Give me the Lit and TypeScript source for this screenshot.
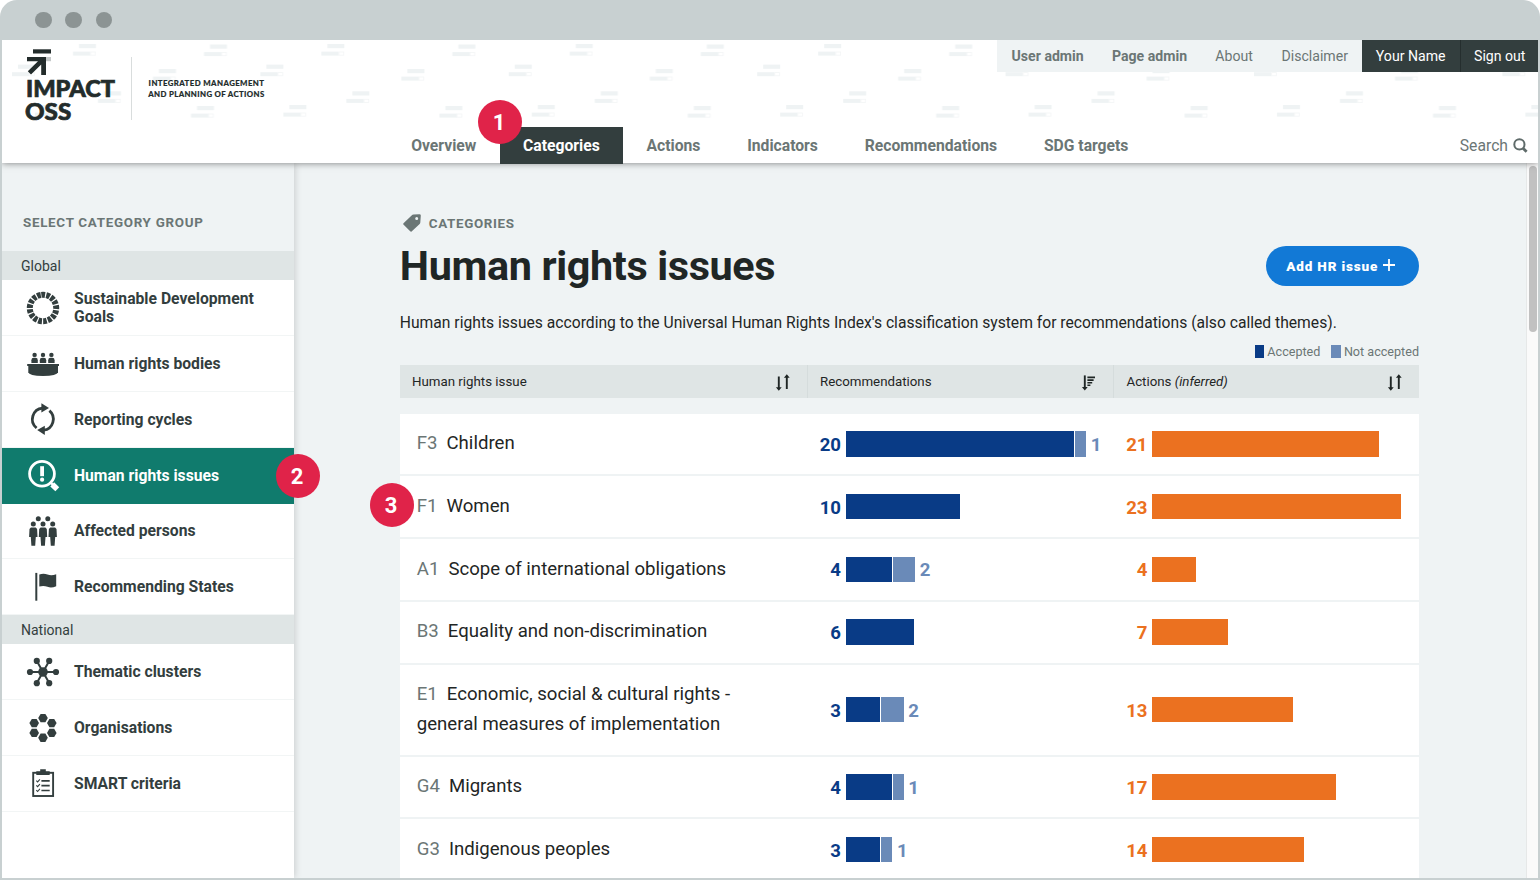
import { LitElement, html, svg, css, TemplateResult } from "lit";
import { customElement, property } from "lit/decorators.js";
import { classMap } from "lit/directives/class-map.js";
import { styleMap } from "lit/directives/style-map.js";

const SEGMENT = 83 / 17;
const HEX = "-4.8,0 -2.4,-4.2 2.4,-4.2 4.8,0 2.4,4.2 -2.4,4.2";

const icons: Record<string, TemplateResult> = {
  wheel: svg`<circle cx="17" cy="17" r="13.21" fill="none" stroke="currentColor" stroke-width="6"
    stroke-dasharray="${SEGMENT - 1.2} 1.2" transform="rotate(-97 17 17)" />`,
  bodies: svg`
    ${[8.6, 17, 25.4].map(
      (x) => svg`<circle cx=${x} cy="7.9" r="2.2" />
      <path d="M${x - 3.2} 16v-2.8q0-2.4 2.4-2.4h1.6q2.4 0 2.4 2.4v2.8z" />`
    )}
    <rect x="1.2" y="17" width="31.8" height="2" />
    <path d="M2.3 19h29.7v6.2Q31 28.9 17 28.9T2.3 25.2z" />`,
  cycle: svg`
    <path d="M16.6 6.1A11.2 11.2 0 0 0 10.6 26" fill="none" stroke="currentColor" stroke-width="2.8" />
    <path d="M17.6 28.2A11.2 11.2 0 0 0 23.4 8.6" fill="none" stroke="currentColor" stroke-width="2.8" />
    <path d="M15.4 1.2L23 6.1L15.4 10.6z" />
    <path d="M18.8 33L11.2 28.1L18.8 23.8z" />`,
  issue: svg`
    <circle cx="16" cy="15.7" r="12.4" fill="none" stroke="currentColor" stroke-width="2.8" />
    <rect x="14.2" y="8.2" width="3.8" height="10" />
    <circle cx="16.1" cy="21.7" r="2.1" />
    <path d="M24 24l3.5 3.4" stroke="currentColor" stroke-width="2.4" />
    <path d="M26.2 26.4l5.1 4.8" stroke="currentColor" stroke-width="5.6" />`,
  persons: svg`
    <circle cx="12.3" cy="4.8" r="2.5" /><circle cx="21.8" cy="4.8" r="2.5" />
    ${[7.3, 17, 26.7].map(
      (x) => svg`<circle cx=${x} cy="9.9" r="2.5" />
      <path d="M${x - 2.4} 13.5h4.8l1.4 1.6l.4 7.9h-1.7l-.6 8.7h-3.8l-.6-8.7h-1.7l.4-7.9z" />`
    )}`,
  flag: svg`
    <rect x="9.3" y="2.9" width="2" height="27.8" />
    <path d="M13.3 4.6Q17.5 3 21.5 4.6T30.2 4.3V16.2Q25.5 18.2 21.5 16.8T13.3 16.6z" />`,
  cluster: svg`
    <path d="M4 17H30M10.8 6L23.2 28M23.2 6L10.8 28" stroke="currentColor" stroke-width="2" />
    <circle cx="17" cy="17" r="4.8" />
    ${[[4, 17], [30, 17], [10.8, 5.9], [23.2, 5.9], [10.8, 28.2], [23.2, 28.2]].map(
      ([x, y]) => svg`<circle cx=${x} cy=${y} r="3.1" />`
    )}`,
  hexes: svg`${[[17, 7.1], [25.8, 12.1], [25.8, 21.9], [17, 26.8], [8.2, 21.9], [8.2, 12.1]].map(
    ([x, y]) => svg`<polygon points=${HEX} transform="translate(${x} ${y})" />`
  )}`,
  clipboard: svg`
    <rect x="7.2" y="6.8" width="19.9" height="23.2" fill="none" stroke="currentColor" stroke-width="1.9" />
    <path d="M10.3 8.9V5.2h3.9V3.2h5.6v2h3.9v3.7z" />
    <path d="M15.4 14.9h8.3M15.4 19.7h8.3M15.4 24.5h8.3" stroke="currentColor" stroke-width="1.7" />
    <path d="M10.3 14.6l1.3 1.3l2.3-2.6M10.3 19.4l1.3 1.3l2.3-2.6M10.3 24.2l1.3 1.3l2.3-2.6" fill="none" stroke="currentColor" stroke-width="1.1" />`,
};

const sortIcon = svg`
  <path d="M3.8 3.4V16M11.8 16V3" stroke="currentColor" stroke-width="1.9" />
  <path d="M.9 14.3h5.8L3.8 17.8zM8.9 4.8h5.8L11.8 1.2z" />`;
const sortedIcon = svg`
  <path d="M3.8 2.4V15.6" stroke="currentColor" stroke-width="1.9" />
  <path d="M.9 14h5.8L3.8 17.6z" />
  <path d="M6.4 4.4H14M6.4 7.1H12.6M6.4 9.8H11.2M6.4 12.3H9.4" stroke="currentColor" stroke-width="1.6" />`;

interface NavItem { label: string; icon: string; active?: boolean; }
const groups: { title: string; items: NavItem[] }[] = [
  {
    title: "Global",
    items: [
      { label: "Sustainable Development Goals", icon: "wheel" },
      { label: "Human rights bodies", icon: "bodies" },
      { label: "Reporting cycles", icon: "cycle" },
      { label: "Human rights issues", icon: "issue", active: true },
      { label: "Affected persons", icon: "persons" },
      { label: "Recommending States", icon: "flag" },
    ],
  },
  {
    title: "National",
    items: [
      { label: "Thematic clusters", icon: "cluster" },
      { label: "Organisations", icon: "hexes" },
      { label: "SMART criteria", icon: "clipboard" },
    ],
  },
];

interface Row { code: string; name: string; yes: number; no: number; actions: number; }
const rows: Row[] = [
  { code: "F3", name: "Children", yes: 20, no: 1, actions: 21 },
  { code: "F1", name: "Women", yes: 10, no: 0, actions: 23 },
  { code: "A1", name: "Scope of international obligations", yes: 4, no: 2, actions: 4 },
  { code: "B3", name: "Equality and non-discrimination", yes: 6, no: 0, actions: 7 },
  { code: "E1", name: "Economic, social & cultural rights - general measures of implementation", yes: 3, no: 2, actions: 13 },
  { code: "G4", name: "Migrants", yes: 4, no: 1, actions: 17 },
  { code: "G3", name: "Indigenous peoples", yes: 3, no: 1, actions: 14 },
];

const REC_UNIT = 11.4;
const ACTION_UNIT = 10.81;

@customElement("oss-header")
class OssHeader extends LitElement {
  static styles = css`
    :host { display: block; position: relative; z-index: 2; height: 123.3px; background: #fff; box-shadow: 0 0 7px rgba(0, 0, 0, 0.5); clip-path: inset(0 0 -12px 0); }
    .pattern { position: absolute; inset: 0; width: 100%; height: 100%; }
    .content { position: relative; height: 100%; display: flex; justify-content: space-between; }
    .logo { width: 280px; height: 100px; flex: none; }
    .side { display: flex; flex-direction: column; justify-content: space-between; flex: 1; height: 124px; }
    .user { display: flex; align-self: flex-end; height: 32px; line-height: 32px; font-size: 14.1px; color: #6b7675; }
    .user span { padding: 0 13.6px 0 15px; background: #eff3f4; white-space: nowrap; }
    .user .strong { font-weight: 700; padding-right: 13.3px; }
    .user .dark { background: #333e3e; color: #fff; padding: 0 14.3px; }
    .user .last { border-left: 1px solid #252e2e; padding: 0 12.5px 0 13.3px; }
    .main { display: flex; margin-left: 105.8px; height: 37px; line-height: 37px; font-size: 15.7px; font-weight: 700; color: #6b7675; }
    .main span { padding: 0 23.4px; white-space: nowrap; }
    .main .active { background: #333e3e; color: #fff; }
    .main .search { margin-left: auto; padding: 0 10px 0 0; font-weight: 400; display: flex; align-items: center; gap: 5px; }
    .search svg { margin-top: -1px; }
  `;
  render() {
    const marks = [[71, 4], [202, 4.5], [10, 24.6], [151, 29], [96, 51.3], [189, 66], [33, 65], [-46.4, 4.5]];
    return html`
      <svg class="pattern" aria-hidden="true">
        <defs>
          <pattern id="dashes" width="248.4" height="123" patternUnits="userSpaceOnUse">
            ${marks.map(([x, y]) => svg`<g transform="translate(${x} ${y})" fill="#eff3f4">
              <rect x="6" y="0" width="17" height="4.2" />
              <rect x="0" y="7.6" width="17.4" height="4" />
              <rect x="17.6" y="8" width="4.8" height="3.2" fill="#fff" stroke="#f3f5f6" stroke-width=".8" />
            </g>`)}
          </pattern>
        </defs>
        <rect width="100%" height="100%" fill="url(#dashes)" />
      </svg>
      <div class="content">
        <svg class="logo" viewBox="2 40 280 100" fill="#232c2b">
          <rect x="33" y="49.3" width="18" height="4.2" />
          <rect x="46" y="57" width="5" height="4.2" fill="#c4c8c8" />
          <path d="M27 57H46V75H41.2V64.4L31 74.4L27.8 71.3L38 61.2H27z" />
          <g font-family="Lato" font-weight="900" font-size="23.4" stroke="#232c2b" stroke-width=".7">
            <text x="26" y="97" textLength="89" lengthAdjust="spacingAndGlyphs">IMPACT</text>
            <text x="25" y="120" textLength="46.2" lengthAdjust="spacingAndGlyphs">OSS</text>
          </g>
          <rect x="131" y="57" width="1" height="63" fill="#d9dddd" />
          <g font-family="Lato" font-weight="900" font-size="7.8" stroke="#232c2b" stroke-width=".15">
            <text x="148.6" y="86.4" textLength="115.4">INTEGRATED MANAGEMENT</text>
            <text x="148.2" y="97.1" textLength="116">AND PLANNING OF ACTIONS</text>
          </g>
        </svg>
        <div class="side">
          <div class="user">
            <span class="strong">User admin</span><span class="strong">Page admin</span>
            <span>About</span><span>Disclaimer</span>
            <span class="dark">Your Name</span><span class="dark last">Sign out</span>
          </div>
          <div class="main">
            <span>Overview</span><span class="active">Categories</span><span>Actions</span>
            <span>Indicators</span><span>Recommendations</span><span>SDG targets</span>
            <span class="search">Search
              <svg width="15" height="15" viewBox="0 0 15 15" fill="none" stroke="#5f6b6a">
                <circle cx="6.4" cy="6.4" r="5.1" stroke-width="2" />
                <path d="M10 10.2L13.6 13.8" stroke-width="2.8" />
              </svg>
            </span>
          </div>
        </div>
      </div>`;
  }
}

@customElement("oss-sidebar")
class OssSidebar extends LitElement {
  static styles = css`
    :host { display: block; width: 291.6px; flex: none; background: #fff; box-shadow: 0 0 8px rgba(0, 0, 0, 0.2); position: relative; z-index: 1; color: #333e3e; }
    .title { height: 88px; box-sizing: border-box; padding: 51.8px 0 0 21px; background: #eff3f4; font-size: 13.4px; line-height: 16px; font-weight: 700; letter-spacing: 0.7px; color: #6b7675; }
    .group { height: 29.2px; line-height: 30px; padding-left: 19px; font-size: 14px; background: #dfe5e5; }
    .item { display: flex; align-items: center; height: 55.8px; box-sizing: border-box; border-bottom: 1.4px solid #f2f5f5; padding-left: 23.7px; font-size: 15.7px; line-height: 18.6px; font-weight: 700; }
    .icon { width: 34px; height: 34px; flex: none; margin-right: 14.3px; }
    .label { width: 190px; padding-top: 1.2px; }
    .active { background: #107b6d; color: #fff; border-color: #107b6d; }
  `;
  render() {
    return html`
      <div class="title">SELECT CATEGORY GROUP</div>
      ${groups.map((g) => html`
        <div class="group">${g.title}</div>
        ${g.items.map((i) => html`
          <div class=${classMap({ item: true, active: !!i.active })}>
            <svg class="icon" viewBox="0 0 34 34" fill="currentColor">${icons[i.icon]}</svg>
            <span class="label">${i.label}</span>
          </div>`)}
      `)}`;
  }
}

@customElement("oss-row")
class OssRow extends LitElement {
  @property({ attribute: false }) row!: Row;
  static styles = css`
    :host { display: grid; grid-template-columns: 407px 306.5px 305.6px; align-items: center; background: #fff; border-bottom: 2px solid #eff3f4; padding: 15.6px 0 15.7px; }
    .name { padding-left: 17px; width: 350px; font-size: 18.6px; line-height: 29.4px; color: #1f2625; }
    .code { color: #6b7675; margin-right: 9px; }
    .chart { display: flex; align-items: center; height: 25.4px; font-size: 18.6px; font-weight: 700; }
    .num { width: 34.2px; text-align: right; margin-right: 5px; padding-top: 2px; }
    .bar { height: 25.4px; }
    .yes { color: #093b86; }
    .no { color: #6a8ab8; padding: 2px 0 0 4.8px; }
    .act { color: #eb7120; }
    .bar.yes { background: #093b86; }
    .bar.no { background: #6a8ab8; padding: 0; border-left: 1.4px solid #fff; box-sizing: border-box; }
    .bar.act { background: #eb7120; }
  `;
  render() {
    const r = this.row;
    return html`
      <div class="name"><span class="code">${r.code}</span>${r.name}</div>
      <div class="chart">
        <span class="num yes">${r.yes}</span>
        <span class="bar yes" style=${styleMap({ width: `${r.yes * REC_UNIT}px` })}></span>
        ${r.no ? html`<span class="bar no" style=${styleMap({ width: `${r.no * REC_UNIT + 0.6}px` })}></span><span class="no">${r.no}</span>` : ""}
      </div>
      <div class="chart">
        <span class="num act">${r.actions}</span>
        <span class="bar act" style=${styleMap({ width: `${r.actions * ACTION_UNIT}px` })}></span>
      </div>`;
  }
}

@customElement("app-root")
class AppRoot extends LitElement {
  static styles = css`
    :host { display: block; position: relative; box-sizing: border-box; width: 1540px; height: 880px; overflow: hidden; padding: 0 2px 2px; background: #c8d0d1; border-radius: 17px 17px 0 0; font-family: Roboto, sans-serif; color: #1f2625; }
    .window-bar { height: 40px; display: flex; align-items: center; gap: 13.8px; padding-left: 33px; box-sizing: border-box; }
    .window-bar i { width: 16.6px; height: 16.6px; border-radius: 50%; background: #8c9494; }
    .body { height: 714.7px; display: flex; overflow: hidden; background: #eff3f4; }
    .page { flex: 1; min-width: 0; padding: 51px 106.5px 0 106.2px; }
    .kicker { display: flex; align-items: center; gap: 8px; height: 18px; padding-left: 3px; font-size: 13.4px; font-weight: 700; letter-spacing: 0.65px; color: #6b7675; }
    .heading { display: flex; justify-content: space-between; align-items: center; height: 66.6px; }
    h1 { margin: 0; font-size: 41.4px; line-height: 48px; font-weight: 700; letter-spacing: -0.38px; }
    .add { display: flex; align-items: center; justify-content: center; gap: 5px; width: 153.5px; height: 40px; border-radius: 20px; background: #1279d6; color: #fff; font-size: 13.5px; font-weight: 900; letter-spacing: 0.85px; padding-right: 3px; box-sizing: border-box; }
    .add svg { margin-top: -1px; }
    .intro { margin: 14px 0 0; font-size: 15.66px; line-height: 20px; white-space: nowrap; }
    .legend { display: flex; justify-content: flex-end; align-items: center; height: 18px; margin-top: 9.4px; font-size: 12.6px; color: #6b7675; }
    .legend i { width: 9.5px; height: 13px; margin: 0 3px 0 11px; background: #093b86; }
    .legend .light { background: #6a8ab8; }
    .head { display: grid; grid-template-columns: 407px 306.5px 305.6px; height: 33px; margin: 4.5px 0 16px; background: #dfe5e5; font-size: 13.3px; }
    .cell { display: flex; align-items: center; justify-content: space-between; padding: 0 16px 0 12.2px; border-left: 1px solid #d5dcdc; }
    .cell:first-child { border-left: 0; }
    .cell svg { width: 16px; height: 19px; margin-top: 2px; }
    .scroll { width: 12.5px; flex: none; box-sizing: border-box; border-left: 1px solid #e6e8e8; background: #fafafa; padding: 2.7px 1px 0 2.4px; }
    .thumb { height: 166px; border-radius: 4px; background: #c1c1c1; }
    .badge { position: absolute; z-index: 5; width: 44px; height: 44px; box-sizing: border-box; padding-right: 2px; border-radius: 50%; background: #e02349; color: #fff; font-size: 22px; line-height: 45px; font-weight: 700; text-align: center; }
    .b1 { left: 478px; top: 100px; }
    .b2 { left: 276px; top: 454px; }
    .b3 { left: 370px; top: 483px; }
  `;
  render() {
    return html`
      <div class="window-bar"><i></i><i></i><i></i></div>
      <oss-header></oss-header>
      <div class="body">
        <oss-sidebar></oss-sidebar>
        <div class="page">
          <div class="kicker">
            <svg width="18" height="18" viewBox="0 0 18 18" fill="#6b7675">
              <path fill-rule="evenodd" d="M8.6 1.6Q9.4.6 10.6.6L16.4.2Q17.8.2 17.8 1.6L17.3 8.4Q17.2 9.5 16.4 10.3L8.6 17.5Q7.8 18 7.2 17.3L.4 10.6Q-.1 9.9.5 9.2zM13.7 3A1.5 1.5 0 1 0 13.7 6A1.5 1.5 0 1 0 13.7 3z" />
            </svg>CATEGORIES
          </div>
          <div class="heading">
            <h1>Human rights issues</h1>
            <div class="add">Add HR issue
              <svg width="12" height="12" viewBox="0 0 12 12"><path d="M6 0V12M0 6H12" stroke="#fff" stroke-width="1.8" /></svg>
            </div>
          </div>
          <p class="intro">Human rights issues according to the Universal Human Rights Index's classification system for recommendations (also called themes).</p>
          <div class="legend"><i></i>Accepted<i class="light"></i>Not accepted</div>
          <div class="head">
            <div class="cell">Human rights issue<svg viewBox="0 0 16 19" fill="currentColor">${sortIcon}</svg></div>
            <div class="cell">Recommendations<svg viewBox="0 0 16 19" fill="currentColor">${sortedIcon}</svg></div>
            <div class="cell"><span>Actions <em>(inferred)</em></span><svg viewBox="0 0 16 19" fill="currentColor">${sortIcon}</svg></div>
          </div>
          ${rows.map((r) => html`<oss-row .row=${r}></oss-row>`)}
        </div>
        <div class="scroll"><div class="thumb"></div></div>
      </div>
      <div class="badge b1">1</div>
      <div class="badge b2">2</div>
      <div class="badge b3">3</div>`;
  }
}
